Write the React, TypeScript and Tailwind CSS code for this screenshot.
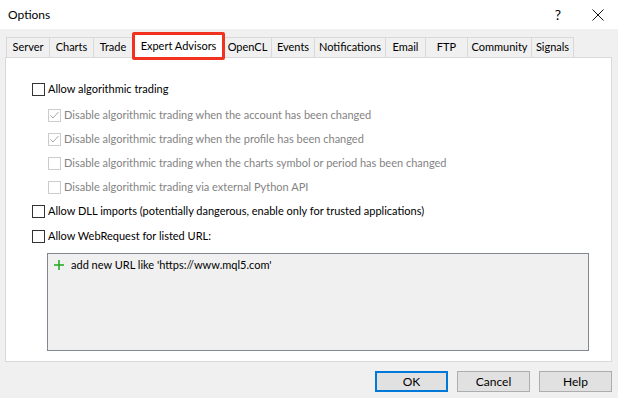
import React from 'react';

const tabs = [
  { label: 'Server', w: 44 },
  { label: 'Charts', w: 45 },
  { label: 'Trade', w: 40 },
  { label: 'Expert Advisors', w: 91, active: true },
  { label: 'OpenCL', w: 49 },
  { label: 'Events', w: 44 },
  { label: 'Notifications', w: 72 },
  { label: 'Email', w: 41 },
  { label: 'FTP', w: 43 },
  { label: 'Community', w: 65 },
  { label: 'Signals', w: 43 },
];

const Check = ({ checked = false, disabled = false }: { checked?: boolean; disabled?: boolean }) => (
  <div
    className={`w-[13px] h-[13px] shrink-0 border bg-white flex items-center justify-center ${
      disabled ? 'border-[#cccccc]' : 'border-[#333333]'
    }`}
  >
    {checked && (
      <svg width="11" height="11" viewBox="0 0 11 11">
        <polyline points="1.5,5.5 4,8 9.5,2" fill="none" stroke={disabled ? '#a8a8a8' : '#333'} strokeWidth="1" />
      </svg>
    )}
  </div>
);

const Row = ({
  label,
  sub = false,
  checked = false,
  className = '',
}: {
  label: string;
  sub?: boolean;
  checked?: boolean;
  className?: string;
}) => (
  <div className={`h-[24px] flex items-center ${sub ? 'pl-[42px]' : 'pl-[26px]'} ${className}`}>
    <Check checked={checked} disabled={sub} />
    <span className={`ml-[3px] whitespace-nowrap ${sub ? 'text-[#838383]' : 'text-black'}`}>{label}</span>
  </div>
);

export default function App() {
  return (
    <div
      className="w-[618px] h-[398px] bg-[#f0f0f0] flex flex-col text-[11px] text-black overflow-hidden"
      style={{ fontFamily: 'Lato, "Liberation Sans", Arial, sans-serif' }}
    >
      {/* title bar */}
      <div className="h-[29px] bg-white flex items-center shrink-0">
        <span className="ml-[8px] text-[12px] text-black">Options</span>
        <span className="ml-auto mr-[31px] text-[14px]">?</span>
        <svg width="12" height="12" viewBox="0 0 12 12" className="mr-[14px]">
          <path d="M0.5 0.5 L11.5 11.5 M11.5 0.5 L0.5 11.5" stroke="#111" strokeWidth="1" />
        </svg>
      </div>

      {/* tabs */}
      <div className="flex items-end pl-[6px] h-[28px] shrink-0 relative z-10">
        {tabs.map((t) =>
          t.active ? (
            <div
              key={t.label}
              className="relative h-[24px] bg-white border border-b-0 border-[#d9d9d9] -mb-px flex items-start justify-center pt-[3px]"
              style={{ width: t.w }}
            >
              {t.label}
              <div className="absolute -left-[2px] -right-[2px] -top-[3px] -bottom-[2px] border-[3px] border-[#f0321e] rounded-[2px]" />
            </div>
          ) : (
            <div
              key={t.label}
              className="h-[20px] bg-[#f0f0f0] border border-b-0 border-[#d9d9d9] -ml-px first:ml-0 flex items-center justify-center"
              style={{ width: t.w }}
            >
              {t.label}
            </div>
          )
        )}
      </div>

      {/* panel */}
      <div className="mx-[5px] w-[607px] h-[305px] bg-white border border-[#d9d9d9] shrink-0 pt-[19px]">
        <Row label="Allow algorithmic trading" />
        <Row label="Disable algorithmic trading when the account has been changed" sub checked className="mt-[2px]" />
        <Row label="Disable algorithmic trading when the profile has been changed" sub checked />
        <Row label="Disable algorithmic trading when the charts symbol or period has been changed" sub />
        <Row label="Disable algorithmic trading via external Python API" sub />
        <Row label="Allow DLL imports (potentially dangerous, enable only for trusted applications)" />
        <Row label="Allow WebRequest for listed URL:" className="mt-px" />
        <div className="ml-[41px] mt-[5px] w-[542px] h-[98px] bg-[#f0f0f0] border border-[#828790]">
          <div className="flex items-center h-[22px] pl-[6px]">
            <svg width="10" height="10" viewBox="0 0 10 10">
              <path d="M5 0 V10 M0 5 H10" stroke="#1fa81f" strokeWidth="1.5" />
            </svg>
            <span className="ml-[7px]">add new URL like 'https://www.mql5.com'</span>
          </div>
        </div>
      </div>

      {/* buttons */}
      <div className="flex justify-end gap-[9px] pr-[6px] mt-[9px]">
        <button className="w-[73px] h-[21px] bg-[#e1e1e1] border-2 border-[#0078d7] text-black text-[12px]">OK</button>
        <button className="w-[73px] h-[21px] bg-[#e1e1e1] border border-[#adadad] text-black text-[12px]">Cancel</button>
        <button className="w-[73px] h-[21px] bg-[#e1e1e1] border border-[#adadad] text-black text-[12px]">Help</button>
      </div>
    </div>
  );
}
